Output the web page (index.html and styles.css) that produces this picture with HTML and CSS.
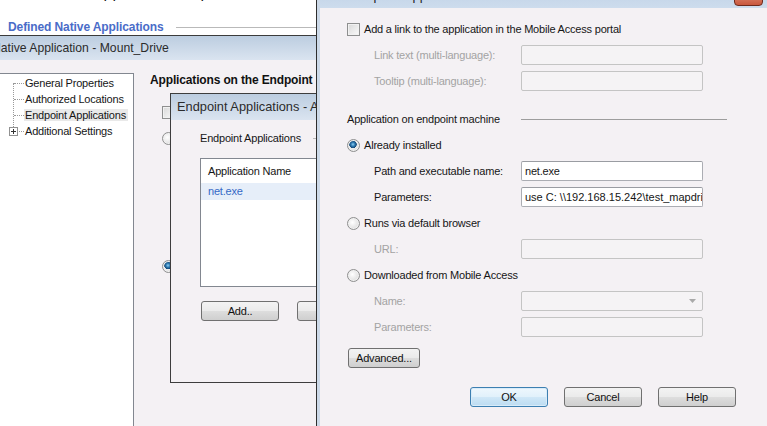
FILE: index.html
```html
<!DOCTYPE html>
<html lang="en">

<head>
    <meta charset="UTF-8">
    <title>Edit Endpoint Application</title>
    <link rel="stylesheet" href="styles.css">
</head>

<body>
    <div class="desk">

        <!-- Native application properties (back window) -->
        <div class="win win-props">
            <div class="page-head">
                <div class="cut-title">Native Application Properties</div>
                <div class="section-head">
                    <span>Defined Native Applications</span>
                    <i class="rule"></i>
                </div>
            </div>
            <div class="dlg-native">
                <div class="titlebar titlebar-native">Native Application - Mount_Drive</div>
                <div class="native-body">
                    <ul class="tree">
                        <li>General Properties</li>
                        <li>Authorized Locations</li>
                        <li><span class="sel">Endpoint Applications</span></li>
                        <li class="has-kids">
                            <svg class="expander" width="9" height="9" viewBox="0 0 9 9">
                                <rect x="0.5" y="0.5" width="8" height="8" fill="#fff" stroke="#919191" />
                                <path d="M2 4.5h5M4.5 2v5" stroke="#333" />
                            </svg>
                            Additional Settings
                        </li>
                    </ul>
                    <div class="native-main">
                        <h3>Applications on the Endpoint</h3>
                        <span class="check bg-check"></span>
                        <span class="radio bg-radio"></span>
                        <span class="radio on bg-radio-on"></span>
                    </div>
                </div>
            </div>
        </div>

        <!-- Endpoint applications dialog -->
        <div class="win win-endpoint">
            <div class="titlebar titlebar-ep">Endpoint Applications - Add</div>
            <div class="ep-body">
                <div class="group-head">
                    <span>Endpoint Applications</span>
                    <i class="rule"></i>
                </div>
                <div class="listbox">
                    <div class="list-header">Application Name</div>
                    <div class="list-row">net.exe</div>
                </div>
                <div class="ep-buttons">
                    <button class="btn">Add..</button>
                    <button class="btn">Edit..</button>
                </div>
            </div>
        </div>

        <!-- Edit endpoint application dialog (front) -->
        <div class="win win-edit">
            <div class="edit-title">Edit Endpoint Application
                <span class="close-btn"></span>
            </div>
            <div class="edit-body">
                <div class="row">
                    <span class="check"></span>
                    <span class="opt-label">Add a link to the application in the Mobile Access portal</span>
                </div>
                <div class="row indent">
                    <span class="field-label disabled">Link text (multi-language):</span>
                    <span class="input off"></span>
                </div>
                <div class="row indent">
                    <span class="field-label disabled">Tooltip (multi-language):</span>
                    <span class="input off"></span>
                </div>

                <div class="row group-row">
                    <span class="group-label">Application on endpoint machine</span>
                    <i class="group-line"></i>
                </div>
                <div class="row">
                    <span class="radio on"></span>
                    <span class="opt-label">Already installed</span>
                </div>
                <div class="row indent">
                    <span class="field-label">Path and executable name:</span>
                    <span class="input">net.exe</span>
                </div>
                <div class="row indent">
                    <span class="field-label">Parameters:</span>
                    <span class="input wide-text">use C: \\192.168.15.242\test_mapdrive</span>
                </div>
                <div class="row">
                    <span class="radio"></span>
                    <span class="opt-label">Runs via default browser</span>
                </div>
                <div class="row indent">
                    <span class="field-label disabled">URL:</span>
                    <span class="input off"></span>
                </div>
                <div class="row">
                    <span class="radio"></span>
                    <span class="opt-label">Downloaded from Mobile Access</span>
                </div>
                <div class="row indent">
                    <span class="field-label disabled">Name:</span>
                    <span class="input off combo">
                        <svg width="7" height="4" viewBox="0 0 7 4"><path d="M0 0h7L3.5 4z" fill="#a9a9a9" /></svg>
                    </span>
                </div>
                <div class="row indent">
                    <span class="field-label disabled">Parameters:</span>
                    <span class="input off"></span>
                </div>

                <button class="btn btn-advanced">Advanced...</button>

                <div class="dialog-buttons">
                    <button class="btn btn-ok">OK</button>
                    <button class="btn">Cancel</button>
                    <button class="btn">Help</button>
                </div>
            </div>
        </div>

    </div>
</body>

</html>
```

FILE: styles.css
```css
* {
    box-sizing: border-box;
}

body {
    margin: 0;
    font-family: "Liberation Sans", Arial, sans-serif;
    font-size: 11px;
    letter-spacing: -0.2px;
    color: #161616;
    background-color: #f4f1f4;
}

.desk {
    position: relative;
    width: 767px;
    height: 426px;
    overflow: hidden;
}

/* Windows are placed on the desktop canvas */
.win {
    position: absolute;
    overflow: hidden;
}

.titlebar {
    background: linear-gradient(#bccde0, #dae4f0);
    color: #2b2b2b;
    letter-spacing: 0;
    white-space: nowrap;
    overflow: hidden;
}

.rule {
    flex: 1;
    border-top: 1px solid #b9b9b9;
}

/* Back window */
.win-props {
    left: 0;
    top: 0;
    width: 317px;
    height: 426px;
    background-color: #f4f1f4;
}

.page-head {
    height: 35px;
    background-color: #fff;
    overflow: hidden;
}

.cut-title {
    font-size: 16px;
    line-height: 16px;
    margin: -15px 0 0 44px;
    color: #222;
    letter-spacing: 0;
}

.section-head {
    display: flex;
    align-items: center;
    gap: 12px;
    margin: 19px 0 0 8px;
    line-height: 14px;
    font-size: 12px;
    font-weight: bold;
    letter-spacing: -0.1px;
    color: #4a6cc8;
}

.dlg-native {
    border-top: 1px solid #3b3b3b;
}

.titlebar-native {
    height: 24px;
    line-height: 24px;
    font-size: 12.2px;
    text-indent: -8px;
}

.native-body {
    display: flex;
    padding-top: 13px;
}

.tree {
    position: relative;
    list-style: none;
    margin: 0 0 0 -1px;
    padding: 1px 0 0 0;
    width: 135px;
    height: 360px;
    background-color: #fff;
    border: 1px solid #828790;
}

.tree::before {
    content: "";
    position: absolute;
    left: 13px;
    top: 9px;
    height: 44px;
    border-left: 1px dotted #9a9a9a;
}

.tree li {
    position: relative;
    height: 16px;
    line-height: 16px;
    padding-left: 25px;
    white-space: nowrap;
}

.tree li::before {
    content: "";
    position: absolute;
    left: 14px;
    top: 8px;
    width: 10px;
    border-top: 1px dotted #9a9a9a;
}

.tree li.has-kids::before {
    left: 17px;
    width: 7px;
}

.tree .expander {
    position: absolute;
    left: 9px;
    top: 4px;
}

.tree .sel {
    background-color: #e9e9e9;
    padding: 0 2px 0 1px;
    margin-left: -1px;
}

.native-main {
    padding-left: 16px;
    display: flex;
    flex-direction: column;
    align-items: flex-start;
}

.native-main h3 {
    margin: 0;
    font-size: 12px;
    line-height: 14px;
    letter-spacing: -0.15px;
    color: #111;
    white-space: nowrap;
}

.bg-check {
    margin: 19px 0 0 12px;
}

.bg-radio {
    margin: 13px 0 0 12px;
}

.bg-radio-on {
    margin: 115px 0 0 12px;
}

/* Check boxes and radios */
.check,
.radio {
    display: inline-block;
    flex: none;
    width: 13px;
    height: 13px;
    border: 1px solid #8e8f8f;
    background: linear-gradient(135deg, #d8d8d8, #fafafa);
    box-shadow: inset 0 0 0 1px #f1f1f1;
}

.radio {
    border-radius: 50%;
    background: radial-gradient(circle at 40% 40%, #ffffff, #d2d2d2);
}

.radio.on {
    background:
        radial-gradient(circle at 45% 40%, #8fd0f2 0, #2c78b0 2px, #164a77 3.5px, transparent 4px),
        radial-gradient(circle at 40% 40%, #ffffff, #d2d2d2);
}

/* Middle dialog */
.win-endpoint {
    left: 170px;
    top: 93px;
    width: 220px;
    height: 290px;
    border: 1px solid #3d3d3d;
    background-color: #f4f1f4;
}

.titlebar-ep {
    height: 26px;
    line-height: 26px;
    font-size: 12.8px;
    padding-left: 6px;
}

.ep-body {
    padding: 11px 0 0 29px;
}

.group-head {
    display: flex;
    align-items: center;
    gap: 12px;
    line-height: 14px;
    white-space: nowrap;
}

.listbox {
    margin-top: 13px;
    width: 200px;
    height: 129px;
    border: 1px solid #828790;
    background-color: #fff;
}

.list-header {
    height: 24px;
    line-height: 24px;
    padding-left: 7px;
}

.list-row {
    height: 17px;
    line-height: 17px;
    padding-left: 7px;
    background-color: #e6eef9;
    color: #3469c6;
}

.ep-buttons {
    display: flex;
    gap: 18px;
    margin-top: 14px;
    margin-left: 1px;
}

/* Buttons */
.btn {
    flex: none;
    width: 78px;
    height: 20px;
    padding: 0;
    border: 1px solid #707070;
    border-radius: 3px;
    background: linear-gradient(#f3f3f3 0%, #ebebeb 48%, #dddddd 52%, #cfcfcf 100%);
    font: inherit;
    letter-spacing: -0.2px;
    color: #111;
    text-align: center;
}

.btn-ok {
    border-color: #3c7fb1;
    background: linear-gradient(#eef7fd 0%, #e1f1fb 48%, #cfe7f7 52%, #bcdcf1 100%);
    box-shadow: inset 0 0 0 1px #d8ecf9;
}

/* Front dialog */
.win-edit {
    left: 316px;
    top: -22px;
    width: 470px;
    height: 460px;
    border: 1px solid #2e2e2e;
    background: #ccd9e8;
    padding: 0 3px 3px;
}

.edit-title {
    position: relative;
    height: 29px;
    padding: 10px 0 0 5px;
    line-height: 14px;
    font-size: 12.8px;
    letter-spacing: 0;
    color: #1e1e1e;
    background: linear-gradient(#b9cde3, #cddced);
    white-space: nowrap;
}

.close-btn {
    position: absolute;
    right: 19px;
    top: 8px;
    width: 29px;
    height: 19px;
    border: 1px solid #6e2b1e;
    border-radius: 0 0 4px 4px;
    background: linear-gradient(#e9a68e, #c9573d);
}

.edit-body {
    height: 440px;
    padding: 8px 0 0 27px;
    background-color: #f4f1f4;
}

.row {
    display: flex;
    align-items: center;
    height: 26px;
    white-space: nowrap;
}

.row.indent {
    padding-left: 27px;
}

.opt-label {
    margin-left: 4px;
}

.field-label {
    width: 147px;
    flex: none;
}

.disabled {
    color: #a3a3a3;
}

.input {
    display: flex;
    align-items: center;
    flex: none;
    width: 182px;
    height: 20px;
    padding-left: 3px;
    border: 1px solid #abadb3;
    border-top-color: #9a9ca2;
    border-radius: 2px;
    background-color: #fff;
    overflow: hidden;
    white-space: nowrap;
}

.input.wide-text {
    letter-spacing: 0;
}

.input.off {
    border-color: #c4c4c4;
    background-color: #f5f3f5;
}

.combo {
    justify-content: flex-end;
    padding-right: 6px;
}

.group-row {
    margin-top: 12px;
}

.group-label {
    width: 174px;
    flex: none;
}

.group-line {
    width: 206px;
    border-top: 1px solid #9d9d9d;
}

.btn-advanced {
    display: block;
    width: 72px;
    margin: 8px 0 0 1px;
}

.dialog-buttons {
    display: flex;
    gap: 16px;
    margin-top: 19px;
    padding-left: 123px;
}
```
